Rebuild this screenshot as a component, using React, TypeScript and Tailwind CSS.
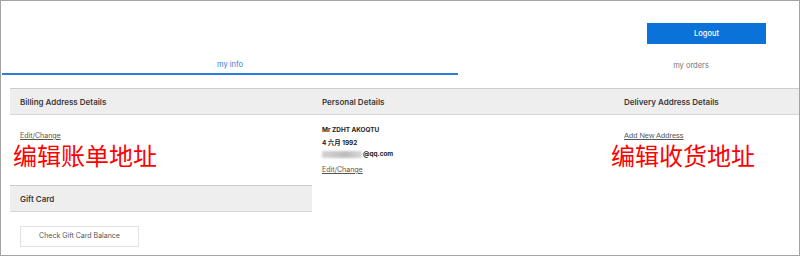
const sans = "font-['Inter','Noto_Sans',sans-serif]";

function SectionHead({ title }: { title: string }) {
  return (
    <div className="flex h-[27px] items-center border-t border-b border-t-[#cccccc] border-b-[#d6d6d6] bg-[#eeeeee] px-[10px]">
      <span className="text-[8px] font-semibold text-[#3a3a3a]">{title}</span>
    </div>
  );
}

function Note({ text, className = "" }: { text: string; className?: string }) {
  return (
    <div
      className={`font-['Noto_Sans_CJK_SC',sans-serif] text-[24px] leading-[24px] text-[#ff0000] ${className}`}
    >
      {text}
    </div>
  );
}

export default function App() {
  return (
    <div
      className={`h-[256px] w-[800px] overflow-hidden border border-[#a3a3a3] bg-white ${sans}`}
    >
      {/* logout */}
      <div className="flex justify-end pt-[22px] pr-[33px]">
        <button className="flex h-[21px] w-[119px] items-center justify-center bg-[#0b72d9] text-[7.5px] font-medium text-white">
          Logout
        </button>
      </div>

      {/* tabs */}
      <div className="mt-[11px] flex pl-[1px]">
        <div className="flex h-[20px] w-[456px] shrink-0 items-center justify-center border-b-2 border-[#2b7de0] pt-[1px] text-[7.5px] text-[#2b7de0]">
          my info
        </div>
        <div className="flex h-[20px] w-[466px] shrink-0 items-center justify-center pt-[1px] text-[7.5px] text-[#777777]">
          my orders
        </div>
      </div>

      {/* account grid */}
      <div className="mt-[13px] grid w-[906px] grid-cols-[302px_302px_302px] pl-[9px]">
        <div>
          <SectionHead title="Billing Address Details" />
          <div className="px-[10px]">
            <a className="mt-[16px] block text-[7px] leading-[10px] text-[#555555] underline">
              Edit/Change
            </a>
            <Note text="编辑账单地址" className="-ml-[7px] mt-[2px]" />
          </div>
          <div className="mt-[18px]">
            <SectionHead title="Gift Card" />
          </div>
          <div className="px-[10px]">
            <button className="mt-[14px] flex h-[21px] w-[119px] items-center justify-center border border-[#e2e2e2] text-[7px] text-[#555555]">
              Check Gift Card Balance
            </button>
          </div>
        </div>

        <div>
          <SectionHead title="Personal Details" />
          <div className="px-[10px] text-[6.4px] font-bold leading-[10px] text-[#222222]">
            <div className="mt-[10px]">Mr ZDHT AKOQTU</div>
            <div className="mt-[3px] font-['Inter','Noto_Sans_CJK_SC',sans-serif]">4 六月 1992</div>
            <div className="mt-[1px] flex items-center">
              <span className="mr-[1px] inline-block h-[7px] w-[40px] bg-[linear-gradient(90deg,#d4d4d4,#bdbdbd_60%,#d8d8d8)] blur-[1px]" />
              <span>@qq.com</span>
            </div>
            <a className="mt-[6px] block text-[7px] font-normal text-[#555555] underline">
              Edit/Change
            </a>
          </div>
        </div>

        <div>
          <SectionHead title="Delivery Address Details" />
          <div className="px-[10px]">
            <a className="mt-[16px] block font-['Liberation_Sans',sans-serif] text-[7.5px] leading-[10px] text-[#555555] underline">
              Add New Address
            </a>
            <Note text="编辑收货地址" className="-ml-[13px] mt-[2px]" />
          </div>
        </div>
      </div>
    </div>
  );
}
